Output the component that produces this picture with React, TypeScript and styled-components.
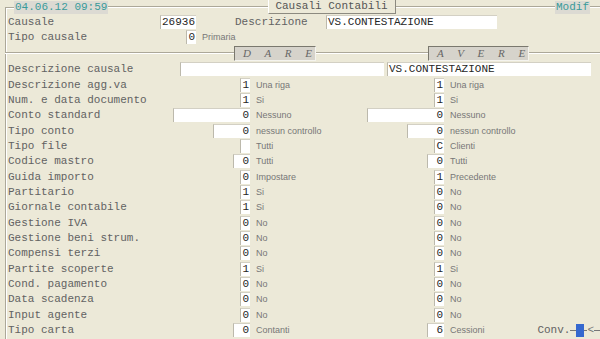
import React from "react";
import styled, { createGlobalStyle } from "styled-components";

const GlobalStyle = createGlobalStyle`
  html, body { margin: 0; padding: 0; background: #ece9d8; overflow: hidden; }
  * { box-sizing: border-box; }
`;

const MONO = `"Liberation Mono", "Courier New", monospace`;
const SANS = `"Liberation Sans", Arial, sans-serif`;

const Screen = styled.div`
  width: 600px;
  height: 339px;
  background: #ece9d8;
  display: flex;
  flex-direction: column;
  font-family: ${MONO};
  font-size: 11px;
  overflow: hidden;
`;

const Header = styled.div`
  display: flex;
  height: 14px;
  align-items: stretch;
`;

const Corner = styled.div`
  margin-left: 5px;
  width: 9px;
  margin-top: 7px;
  border-left: 1px solid #aca899;
  border-top: 1px solid #aca899;
  box-shadow: inset 1px 1px 0 #fff;
`;

const Rule = styled.div<{ $w?: number }>`
  align-self: center;
  height: 0;
  border-top: 1px solid #aca899;
  border-bottom: 1px solid #fff;
  ${(p) => (p.$w ? `width: ${p.$w}px; flex: none;` : `flex: 1;`)}
`;

const StatusBox = styled.div<{ $w: number }>`
  width: ${(p) => p.$w}px;
  margin: 1px 0 0 0;
  height: 13px;
  background: #dcdad3;
  color: #3a9a9a;
  line-height: 13px;
  padding-left: 1px;
  white-space: nowrap;
`;

const TitleBox = styled.div`
  width: 128px;
  height: 14px;
  border-left: 1px solid #fff;
  border-right: 1px solid #8c8a80;
  border-bottom: 1px solid #8c8a80;
  color: #555;
  text-align: center;
  line-height: 13px;
  white-space: nowrap;
`;

const Frame = styled.div`
  flex: 1;
  margin-left: 5px;
  border-left: 1px solid #aca899;
  box-shadow: inset 1px 0 0 #fff;
  padding-left: 1px;
  display: flex;
  flex-direction: column;
`;

const TopRow = styled.div`
  display: flex;
  align-items: center;
  height: 15.5px;
`;

const Label = styled.div<{ $w?: number; $ml?: number }>`
  color: #626262;
  white-space: nowrap;
  padding-left: 1px;
  ${(p) => (p.$w ? `width: ${p.$w}px; flex: none;` : "")}
  ${(p) => (p.$ml ? `margin-left: ${p.$ml}px;` : "")}
`;

const Field = styled.div<{ $w: number; $left?: boolean; $ml?: number }>`
  width: ${(p) => p.$w}px;
  flex: none;
  height: 14px;
  margin-left: ${(p) => p.$ml ?? 0}px;
  background: #fff;
  border-top: 1px solid #d3d0c4;
  border-left: 1px solid #bcb9ac;
  color: #262626;
  font-family: ${MONO};
  font-size: 11px;
  line-height: 13px;
  text-align: ${(p) => (p.$left ? "left" : "right")};
  padding: 0 1px;
  white-space: nowrap;
  overflow: hidden;
`;

const Hint = styled.div<{ $pl?: number }>`
  font-family: ${SANS};
  font-size: 9px;
  color: #777;
  padding-left: ${(p) => p.$pl ?? 6}px;
  white-space: nowrap;
`;

const Divider = styled.div`
  display: flex;
  align-items: center;
  height: 16px;
  margin-left: -2px;
`;

const ColumnTag = styled.div<{ $w: number }>`
  width: ${(p) => p.$w}px;
  flex: none;
  height: 15px;
  background: #d6d3cb;
  border-left: 1px solid #7a786e;
  border-top: 1px solid #7a786e;
  border-right: 1px solid #f4f3ee;
  border-bottom: 1px solid #f4f3ee;
  font-family: "Liberation Serif", "Times New Roman", serif;
  font-style: italic;
  font-size: 11px;
  color: #666;
  line-height: 13px;
  padding-left: 8px;
  letter-spacing: 5.5px;
  white-space: pre;
`;

const Rows = styled.div`
  display: flex;
  flex-direction: column;
  padding-top: 0.5px;
`;

const GridRow = styled.div`
  display: grid;
  grid-template-columns: 162px 81px 112px 82px 1fr;
  align-items: center;
  height: 15.35px;
`;

const WideRow = styled.div`
  display: flex;
  align-items: center;
  height: 15.35px;
`;

const Cell = styled.div`
  display: flex;
  justify-content: flex-end;
`;

const DescCell = styled.div`
  display: flex;
  align-items: center;
  min-width: 0;
`;

const Conv = styled.div`
  margin-left: auto;
  display: flex;
  align-items: center;
  color: #626262;
`;

const ConvLine = styled.span<{ $w: number }>`
  width: ${(p) => p.$w}px;
  height: 0;
  border-top: 1px solid #777;
  display: inline-block;
`;

const Cursor = styled.span`
  width: 8px;
  height: 13px;
  background: #3568cf;
  display: inline-block;
  margin-top: 1px;
`;

const Arrow = styled.span`
  color: #777;
  font-family: ${MONO};
  font-size: 11px;
  line-height: 11px;
`;

type Side = { v: string; w: number; d: string };
type RowData = { label: string; dare: Side; avere: Side; conv?: boolean };

const S = (v: string, d: string, w = 10): Side => ({ v, w, d });

const rows: RowData[] = [
  { label: "Descrizione agg.va", dare: S("1", "Una riga"), avere: S("1", "Una riga") },
  { label: "Num. e data documento", dare: S("1", "Si"), avere: S("1", "Si") },
  { label: "Conto standard", dare: S("0", "Nessuno", 77), avere: S("0", "Nessuno", 77) },
  { label: "Tipo conto", dare: S("0", "nessun controllo", 37), avere: S("0", "nessun controllo", 37) },
  { label: "Tipo file", dare: S("", "Tutti"), avere: S("C", "Clienti") },
  { label: "Codice mastro", dare: S("0", "Tutti", 17), avere: S("0", "Tutti", 17) },
  { label: "Guida importo", dare: S("0", "Impostare"), avere: S("1", "Precedente") },
  { label: "Partitario", dare: S("1", "Si"), avere: S("0", "No") },
  { label: "Giornale contabile", dare: S("1", "Si"), avere: S("0", "No") },
  { label: "Gestione IVA", dare: S("0", "No"), avere: S("0", "No") },
  { label: "Gestione beni strum.", dare: S("0", "No"), avere: S("0", "No") },
  { label: "Compensi terzi", dare: S("0", "No"), avere: S("0", "No") },
  { label: "Partite scoperte", dare: S("1", "Si"), avere: S("1", "Si") },
  { label: "Cond. pagamento", dare: S("0", "No"), avere: S("0", "No") },
  { label: "Data scadenza", dare: S("0", "No"), avere: S("0", "No") },
  { label: "Input agente", dare: S("0", "No"), avere: S("0", "No") },
  { label: "Tipo carta", dare: S("0", "Contanti", 17), avere: S("6", "Cessioni", 17), conv: true },
];

export default function App() {
  return (
    <Screen>
      <GlobalStyle />
      <Header>
        <Corner />
        <StatusBox $w={94}>04.06.12 09:59</StatusBox>
        <Rule />
        <TitleBox>Causali Contabili</TitleBox>
        <Rule />
        <StatusBox $w={35}>Modif</StatusBox>
        <Rule $w={10} />
      </Header>
      <Frame>
        <TopRow>
          <Label $w={153}>Causale</Label>
          <Field $w={36}>26936</Field>
          <Label $ml={38} $w={92}>Descrizione</Label>
          <Field $w={171} $left>VS.CONTESTAZIONE</Field>
        </TopRow>
        <TopRow>
          <Label $w={179}>Tipo causale</Label>
          <Field $w={10}>0</Field>
          <Hint>Primaria</Hint>
        </TopRow>
        <Divider>
          <Rule $w={229} />
          <ColumnTag $w={82}>D A R E</ColumnTag>
          <Rule $w={112} />
          <ColumnTag $w={101}>A V E R E</ColumnTag>
          <Rule />
        </Divider>
        <Rows>
          <WideRow>
            <Label $w={173}>Descrizione causale</Label>
            <Field $w={204} $left />
            <Field $w={204} $ml={3} $left>VS.CONTESTAZIONE</Field>
          </WideRow>
          {rows.map((r) => (
            <GridRow key={r.label}>
              <Label>{r.label}</Label>
              <Cell>
                <Field $w={r.dare.w}>{r.dare.v}</Field>
              </Cell>
              <DescCell>
                <Hint>{r.dare.d}</Hint>
              </DescCell>
              <Cell>
                <Field $w={r.avere.w}>{r.avere.v}</Field>
              </Cell>
              <DescCell>
                <Hint>{r.avere.d}</Hint>
                {r.conv && (
                  <Conv>
                    Conv.
                    <ConvLine $w={6} />
                    <Cursor />
                    <ConvLine $w={3} />
                    <Arrow>&lt;</Arrow>
                    <ConvLine $w={6} />
                  </Conv>
                )}
              </DescCell>
            </GridRow>
          ))}
        </Rows>
      </Frame>
    </Screen>
  );
}
